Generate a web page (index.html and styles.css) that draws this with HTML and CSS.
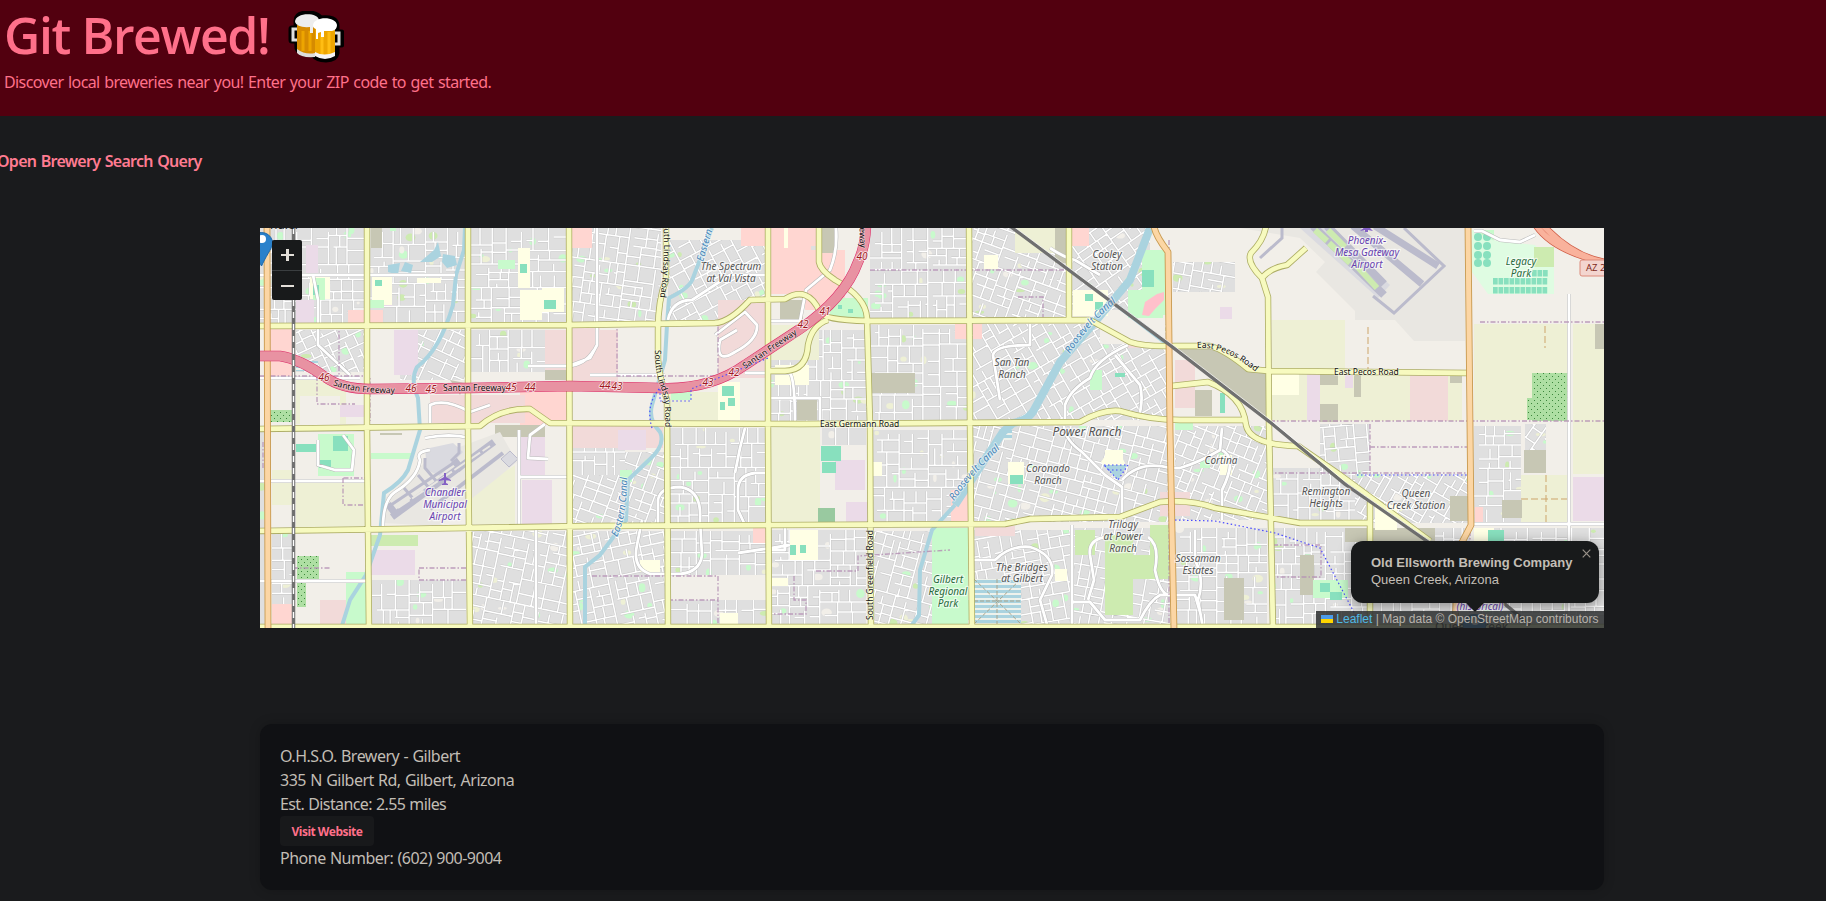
FILE: index.html
```html
<!DOCTYPE html>
<html lang="en">
<head>
<meta charset="utf-8">
<title>Git Brewed!</title>
<link rel="stylesheet" href="styles.css">
</head>
<body>
<header class="hero">
  <h1 class="hero-title"><span class="hero-name">Git Brewed!</span>
    <svg class="beer" width="56" height="52" viewBox="0 0 56 52" aria-hidden="true">
      <g stroke="#000" stroke-width="7" stroke-linejoin="round" fill="#000">
        <path d="M8 18H4v11h5M48 22h5v11h-5M9 10q0-7 11-7 9 0 12 5 16-2 16 7v27q-1 6-10 6-9 0-12-5-14 0-16-6z"/>
      </g>
      <path d="M9 18H5v11h5M47 22h4v11h-5" fill="none" stroke="#dedede" stroke-width="3"/>
      <path d="M9 14h19v29q-15 2-19-4z" fill="#d68b00"/><path d="M15 20v20M22 20v20" stroke="#eda500" stroke-width="3"/>
      <path d="M9 38q8 6 18 4v4Q13 47 9 42z" fill="#ddd"/>
      <path d="M7 11C7 1 30 1 31 9v10h-3v-3q-2-2-3 1v5h-3v-6q-13 1-15-5z" fill="#ededed"/>
      <path d="M27 17h20v27q-10 4-20 0z" fill="#eda500"/><path d="M34 23v21M41 21v22" stroke="#ffbd13" stroke-width="3"/>
      <path d="M27 41q9 5 20 0v4q-10 6-20 0z" fill="#f5f5f5"/>
      <path d="M25 14C26 5 48 5 49 14q0 5-5 6h-8v6h-3v-5l-3 1v6h-2V18q-3-1-3-4z" fill="#fff"/>
    </svg>
  </h1>
  <p class="hero-text">Discover local breweries near you! Enter your ZIP code to get started.</p>
</header>
<main>
  <h2 class="query">Open Brewery Search Query</h2>
  <section class="map">
    <svg class="tiles" viewBox="260 228 1344 400" width="1344" height="400">
      <defs>
        <pattern id="orchard" width="6" height="6" patternUnits="userSpaceOnUse"><rect width="6" height="6" fill="#aedfa3"/><rect x="1" y="1" width="1" height="1" fill="#3c873c"/><rect x="4" y="4" width="1" height="1" fill="#3c873c"/></pattern>
        <pattern id="basin" width="6" height="5" patternUnits="userSpaceOnUse"><rect width="6" height="5" fill="#eef2ec"/><rect width="6" height="3" fill="#aad3df"/></pattern>
        <path id="freeway" d="M255 356H280Q300 359 325 377Q342 389 370 389L470 388 570 386 660 388Q710 390 745 365L800 329Q845 298 858 262Q866 245 866 222"/>
        <path id="lbl-f1" d="M333 385Q355 394 400 393"/>
        <path id="lbl-f2" d="M745 369L800 332"/>
        <path id="lbl-l1" d="M663 219Q666 262 659 305"/>
        <path id="lbl-l2" d="M655 350Q655 375 661 388Q666 398 665 430"/>
        <path id="lbl-ec" d="M617 537Q628 515 627 470"/>
        <path id="lbl-e" d="M703 262L716 218"/>
        <path id="lbl-r1" d="M1070 354Q1090 322 1125 295"/>
        <path id="lbl-r2" d="M954 501Q975 470 1010 440"/>
        <path id="lbl-pecos" d="M1197 348Q1225 346 1258 374"/>
      </defs>
      <rect x="260" y="228" width="1344" height="400" fill="#f2efe9"/>
      <g id="streets"></g>
      <g id="zones"></g>
      <g class="airport">
        <path d="M1240 228H1465V341H1414L1395 320H1355V311L1316 272 1325 262 1300 238Z" fill="#e9e7e2"/>
        <path d="M1300 228H1330L1390 285 1378 298Z" fill="#dadae0"/>
        <path d="M1313 226L1384 295M1327 226L1384 284" stroke="#bbbbcc" stroke-width="8"/>
        <path d="M1353 226L1422 284M1375 226L1438 266" stroke="#bbbbcc" stroke-width="7"/>
        <path d="M1373 296L1394 313 1444 266 1404 228" stroke="#bbbbcc" stroke-width="3"/>
        <path d="M1315 230L1327 241M1329 243L1350 263M1353 262L1377 288M1328 230L1345 247" stroke="#cdebb0" stroke-width="6"/>
        <path d="M1240 226h42v12l-22 20" stroke="#bbbbcc" stroke-width="3"/>
        <path d="M470 495L515 465V524H470Z" fill="#eef0d5"/>
        <path d="M383 523V500L430 458 500 432 517 462 470 500 440 526Z" fill="#e9e7e2"/>
        <path d="M425 449L453 443 463 452 440 476 427 470Z" fill="#dadae0"/>
        <path d="M392 517L494 442M394 512l-6-8M454 460l8 10" stroke="#bbbbcc" stroke-width="7"/>
        <path d="M388 507L458 460M404 488l12 14M418 475l12 14M425 458v10l12 14M459 443v10l-8 8" stroke="#bbbbcc" stroke-width="3"/>
        <path d="M430 509L503 453" stroke="#bbbbcc" stroke-width="4"/>
        <path d="M398 508L490 446M435 500L496 453" stroke="#e9e7e2" stroke-width="2" stroke-dasharray="14 3"/>
        <path d="M501 459l9-8 8 8-9 8z" fill="#dadae0" stroke="#bbbbcc"/>
      </g>
      <g class="water">
        <path d="M465 228L464 250 456 275 453 305Q440 350 417 367 410 380 418 398L420 430 408 470Q402 482 384 493L380 535 366 575 350 600 340 632" />
        <path d="M712 228L693 278Q690 288 669 298L667 325 665 360 652 405Q648 420 660 432 666 445 649 460L628 480 626 520 600 555 585 567V632"/>
        <path class="wide" d="M1150 228L1130 280 1095 322 1060 362 1035 408Q1030 420 1013 423L1003 432 955 505" />
        <path d="M955 505L932 530 920 570 919 615 907 632M1110 300L1168 345"/>
      </g>
      <g id="locals"></g>
      <g class="borders">
        <path d="M260 376H370V421M317 376V404H355M339 324V376M343 478V505H366V478ZM419 568H468V580H419ZM668 324H718V376H617V325M870 270H1068M1018 297H1043V318M1480 322H1604M1270 421H1604M1370 424V472M1370 447H1468M1268 473H1470M592 576H718V628M668 600H718M794 576V600H806V614H772M816 571H858V556L950 550M570 390V430M1273 545H1321V577H1273ZM1470 426V630M1169 240V630M263 468V440M293 568H330"/>
      </g>
      <g id="roads"></g>
      <g fill="none">
        <use href="#freeway" stroke="#dc2a67" stroke-width="10.500"/><use href="#freeway" stroke="#e892a2" stroke-width="9.500"/>
        <path d="M1534 222Q1550 250 1604 262M1540 222Q1570 256 1604 262" stroke="#cf5c45" stroke-width="7"/>
        <path d="M1534 222Q1550 250 1604 262M1540 222Q1570 256 1604 262" stroke="#f9b29c" stroke-width="5.500"/>
        <path d="M293.500 228V628M1010 226L1116 305 1170 345 1270 422 1345 484 1440 550 1530 625" stroke="#707070" stroke-width="3.500"/>
        <path d="M293.500 228V628" stroke="#fff" stroke-width="1.400" stroke-dasharray="6 6"/>
        <path d="M1013 226L1119 305 1173 345 1273 422 1348 484 1443 550" stroke="#fff" stroke-width=".7"/>
        <path d="M652 428Q645 405 660 388V401H691V389L768 358M1175 520L1215 521 1275 533 1320 548 1358 620M1357 475H1468M1104 465H1128L1118 480ZM1108 470H1124" stroke="#4a4aff" stroke-width="1.200" stroke-dasharray="1.500 2.500"/>
      </g>
      <g class="place">
        <text x="731" y="270">The Spectrum</text><text x="731" y="282">at Val Vista</text>
        <text x="1107" y="258">Cooley</text><text x="1107" y="270">Station</text>
        <text x="1012" y="366">San Tan</text><text x="1012" y="378">Ranch</text>
        <text class="big" x="1087" y="436">Power Ranch</text>
        <text x="1048" y="472">Coronado</text><text x="1048" y="484">Ranch</text>
        <text x="1221" y="464">Cortina</text>
        <text x="1123" y="528">Trilogy</text><text x="1123" y="540">at Power</text><text x="1123" y="552">Ranch</text>
        <text x="1022" y="571">The Bridges</text><text x="1022" y="582">at Gilbert</text>
        <text x="1198" y="562">Sossaman</text><text x="1198" y="574">Estates</text>
        <text x="1326" y="495">Remington</text><text x="1326" y="507">Heights</text>
        <text x="1416" y="497">Queen</text><text x="1416" y="509">Creek Station</text>
      </g>
      <g class="place green">
        <text x="948" y="583">Gilbert</text><text x="948" y="595">Regional</text><text x="948" y="607">Park</text>
        <text x="1521" y="265">Legacy</text><text x="1521" y="277">Park</text>
      </g>
      <g class="place purple">
        <text x="445" y="496">Chandler</text><text x="445" y="508">Municipal</text><text x="445" y="520">Airport</text>
        <text x="1367" y="244">Phoenix-</text><text x="1367" y="256">Mesa Gateway</text><text x="1367" y="268">Airport</text>
        <text x="1480" y="610">(historical)</text>
      </g>
      <path d="M444 473h2v4l5 3v1l-5-1v3l2 1v1h-6v-1l2-1v-3l-5 1v-1l5-3zM1366 226h2l5 5-5-1v2h-3v-2l-5 1z" fill="#8461c4"/>
      <g class="road">
        <text><textPath href="#lbl-f1">Santan Freeway</textPath></text><text x="443" y="391">Santan Freeway</text>
        <text><textPath href="#lbl-f2">Santan Freeway</textPath></text>
        <text><textPath href="#lbl-l1">South Lindsay Road</textPath></text><text><textPath href="#lbl-l2">South Lindsay Road</textPath></text>
        <text><textPath href="#lbl-pecos">East Pecos Road</textPath></text>
        <text x="820" y="427">East Germann Road</text><text x="1334" y="375">East Pecos Road</text>
        <text transform="translate(873 620) rotate(-90)">South Greenfield Road</text>
        <text transform="translate(859 215) rotate(88)">Freeway</text>
      </g>
      <g class="canal">
        <text><textPath href="#lbl-e">Eastern</textPath></text><text><textPath href="#lbl-ec">Eastern Canal</textPath></text>
        <text><textPath href="#lbl-r1">Roosevelt Canal</textPath></text><text><textPath href="#lbl-r2">Roosevelt Canal</textPath></text>
      </g>
      <g class="exit">
        <text x="324" y="381">46</text><text x="411" y="392">46</text><text x="431" y="393">45</text><text x="511" y="391">45</text><text x="530" y="391">44</text><text x="605" y="389">44</text><text x="617" y="390">43</text><text x="708" y="386">43</text><text x="734" y="376">42</text><text x="803" y="328">42</text><text x="825" y="315">41</text><text x="862" y="260">40</text>
      </g>
      <text x="270" y="229" class="town">hdler</text><text x="1435" y="631" class="town">Queen Creek</text>
      <rect x="1580" y="260" width="40" height="16" rx="2" fill="#f3d5cf" stroke="#dc8a7a"/><text x="1586" y="271" class="shield">AZ 24</text>
      <g id="pin"><path d="M250 241a12 13 0 0 1 22.500 0c1 6-4 10-11 25c-6-12-12-19-11.500-25z" fill="#2a81cb" stroke="#2069a8"/><circle cx="262" cy="239" r="4" fill="#fff"/></g>
      <use href="#pin" x="1213" y="382"/>
    </svg>
    <div class="zoom"><span class="zoom-btn"><i></i><i class="v"></i></span><span class="zoom-btn"><i></i></span></div>
    <div class="popup"><b>Old Ellsworth Brewing Company</b><br>Queen Creek, Arizona<svg class="close" width="9" height="9" viewBox="0 0 9 9"><path d="M.7.7l7.600 7.600M8.300.7L.7 8.300"/></svg></div>
    <div class="attribution"><svg width="12" height="8" viewBox="0 0 12 8"><path fill="#4c9bea" d="M0 0h12v4H0z"/><path fill="#ffd500" d="M0 4h12v4H0z"/></svg> <a>Leaflet</a> | Map data © OpenStreetMap contributors</div>
  </section>
  <article class="card">
    <p>O.H.S.O. Brewery - Gilbert</p>
    <p>335 N Gilbert Rd, Gilbert, Arizona</p>
    <p class="distance">Est. Distance: 2.55 miles</p>
    <button class="visit">Visit Website</button>
    <p>Phone Number: (602) 900-9004</p>
  </article>
</main>
<script src="map.js"></script>
</body>
</html>
```
FILE: styles.css
```css
* { box-sizing: border-box; }
html, body { margin: 0; height: 901px; overflow: hidden; }
body { background: #1a1b1d; color: #c2bdb5; font: 16px/24px "Noto Sans", sans-serif; }
.hero { height: 116px; padding: 5px 4px; background: #52000f; color: #ff708a; }
.hero-title { display: flex; align-items: flex-start; height: 62px; margin: 0; font-size: 50px; line-height: 60px; font-weight: 600; }
.hero-name { width: 284px; white-space: nowrap; font-family: "Open Sans", "Noto Sans", sans-serif; letter-spacing: -1.400px; }
.beer { margin-top: 6px; }
.hero-text { margin: 3px 0 0; letter-spacing: -.6px; word-spacing: 1px; }
.query { height: 24px; margin: 33px 0 0 -3px; color: #ff7b91; font-size: 16px; line-height: 24px; font-weight: 600; letter-spacing: -.72px; word-spacing: 1px; }
.map { position: relative; width: 1344px; height: 400px; margin: 55px 0 0 260px; overflow: hidden; font-family: "Liberation Sans", Arial, sans-serif; }
.tiles { display: block; }
.airport path[stroke]:not([fill]) { fill: none; }
.water { fill: none; stroke: #aad3df; stroke-width: 4; }
.water .wide { stroke-width: 8; }
.borders { fill: none; stroke: #b48fb4; stroke-width: 1.3; stroke-dasharray: 5 2 1.5 2; opacity: .85; }
.place, .road, .canal, .exit { font-family: "Noto Sans", sans-serif; paint-order: stroke; stroke-linejoin: round; }
.place { font-size: 10px; font-style: italic; text-anchor: middle; fill: #555; stroke: #ffffff99; stroke-width: 2.5px; }
.place .big { font-size: 12px; }
.green { fill: #286a3c; }
.purple { fill: #6843b0; }
.road { font-size: 8.5px; fill: #111; stroke: #ffffff70; stroke-width: 1.5px; }
.canal { font-size: 10px; font-style: italic; fill: #4a86b8; stroke: #ffffff80; stroke-width: 2px; }
.exit { font-size: 10px; font-style: italic; text-anchor: middle; fill: #a01822; stroke: #ffffffd0; stroke-width: 1.6px; }
.town { font: 12px "Noto Sans", sans-serif; fill: #222; }
.shield { font: 9.5px "Noto Sans", sans-serif; fill: #7e2a1c; }
.zoom { position: absolute; left: 12px; top: 12px; width: 30px; border-radius: 2px; overflow: hidden; background: #181a1b; }
.zoom-btn { display: grid; height: 30px; place-items: center; }
.zoom-btn + .zoom-btn { border-top: 1px solid #3a3e40; }
.zoom-btn i { grid-area: 1 / 1; width: 13px; height: 2px; background: #e3dfd9; }
.zoom-btn .v { width: 3px; height: 12px; }
.popup { position: absolute; left: 1091px; top: 313px; width: 248px; height: 62px; padding: 13px 20px; border-radius: 12px; background: #181a1b; box-shadow: 0 3px 14px #0006; color: #c3beb6; font-size: 13px; line-height: 17px; white-space: nowrap; }
.popup::after { content: ""; position: absolute; left: 115px; top: 62px; border: 9px solid transparent; border-top-color: #181a1b; border-bottom: 0; }
.close { position: absolute; right: 8px; top: 8px; fill: none; stroke: #999289; stroke-width: 1.2; }
.attribution { position: absolute; right: 0; bottom: 0; width: 288px; height: 17px; padding-left: 5px; background: #2c2e2fd9; color: #b8b3ab; font-size: 12px; line-height: 16px; white-space: nowrap; }
.attribution a { color: #4fb9e4; }
.card { width: 1344px; height: 166px; margin: 96px 0 0 260px; padding: 20px; border-radius: 12px; background: #101114; box-shadow: 0 0 12px #0003; letter-spacing: -.5px; word-spacing: .6px; }
.card p { margin: 0; }
.card .distance { letter-spacing: -.62px; }
.visit { display: block; width: 94px; height: 30px; padding: 0; border: 0; border-radius: 4px; background: #18191b; color: #ff708a; font: 700 12px "Noto Sans", sans-serif; letter-spacing: -.5px; }
```
FILE: map.js
```js
let seed = 11;
const rnd = () => (seed = (seed * 16807) % 2147483647) / 2147483647;
const byId = id => document.getElementById(id);
const line = (d, color, width) => `<path d="${d}" fill="none" stroke="${color}" stroke-width="${width}" stroke-linejoin="round"/>`;

// Neighbourhoods: left, top, right, bottom, street rotation.
const blocks = [
  [260,228,365,324],[296,330,366,372,-25],[369,228,466,324],[400,330,466,380,25],[471,228,566,323],[471,330,545,372],
  [571,228,661,322,8],[668,240,766,320,-28],[771,228,818,280],[870,228,967,318],[971,228,1067,318,20],[1071,228,1150,310,-35],
  [870,325,967,422],[820,330,867,424],[972,324,1168,420,-30],[972,426,1170,522,15],[972,530,1070,626,-10],[1074,528,1170,626,10],
  [1175,426,1267,520,22],[1175,528,1267,626],[1271,468,1368,520],[1320,424,1370,475,-5],[1355,474,1468,523,30],[1474,426,1521,522],[1525,424,1560,470,35],
  [1270,528,1370,626],[1370,528,1470,626],[1474,528,1604,626],[670,428,766,524],[770,330,866,424],[770,530,866,626],
  [571,452,665,525,20],[571,531,665,626,-12],[471,531,567,626,12],[372,580,466,626],[670,531,766,575],[670,600,766,626],
  [872,430,967,524],[873,531,940,626,15],[1173,262,1235,292,10],[571,430,625,475],[822,428,866,445],[260,430,266,626],[272,531,292,604]
];
const tints = ['#c8facc','#cdebb0','#eef0d5','#f2efe9','#c8facc','#c8facc'];
let out = '', clips = '';
function split(x, y, w, h, list) {
  if (Math.max(w, h) < 18 || (Math.min(w, h) < 7)) return;
  const t = .35 + rnd() * .3;
  if (w > h * (.6 + rnd())) {
    const c = x + w * t, gap = rnd() < .35 ? 4 : 0;
    list.push(`M${c.toFixed(1)} ${y + gap}V${(y + h).toFixed(1)}`);
    split(x, y, w * t, h, list); split(c, y, w * (1 - t), h, list);
  } else {
    const c = y + h * t, gap = rnd() < .35 ? 5 : 0;
    list.push(`M${x + gap} ${c.toFixed(1)}H${(x + w).toFixed(1)}`);
    split(x, y, w, h * t, list); split(x, c, w, h * (1 - t), list);
  }
}
blocks.forEach(([x, y, r, b, a = 0], i) => {
  const w = r - x, h = b - y, pad = a ? Math.max(w, h) * .4 : 0, list = [];
  split(x - pad, y - pad, w + 2 * pad, h + 2 * pad, list);
  clips += `<clipPath id="c${i}"><rect x="${x}" y="${y}" width="${w}" height="${h}"/></clipPath>`;
  let greens = '';
  for (let k = 0; k < w * h / 900; k++) {
    greens += `<ellipse cx="${x + rnd() * w}" cy="${y + rnd() * h}" rx="${1.5 + rnd() * 4}" ry="${1.5 + rnd() * 3}" fill="${tints[Math.floor(rnd() * 6)]}"/>`;
  }
  const d = list.join('');
  out += `<g clip-path="url(#c${i})"><rect x="${x}" y="${y}" width="${w}" height="${h}" fill="#dfdfdf"/>${greens}<g transform="rotate(${a} ${x + w / 2} ${y + h / 2})">${line(d, '#c6c6c6', 2.4)}${line(d, '#fff', 1.5)}</g></g>`;
});
byId('streets').innerHTML = `<defs>${clips}</defs>` + out;

// Land use: colour, then x y width height for each plot.
const land = {
  '#eef0d5': [[771,426,49,96],[1272,320,73,50],[1272,373,190,48],[1474,324,94,96],[1573,324,31,150],[1521,475,49,47],[296,480,70,48],[272,470,21,35],[296,380,50,44],[668,392,52,30],[771,325,48,35],[1015,228,55,25],[470,470,45,50]],
  '#ffd6d1': [[268,328,24,48],[571,228,21,20],[741,228,78,18],[771,246,40,48],[805,250,40,60],[556,330,14,45],[520,390,48,35],[571,400,20,25],[1072,228,17,18],[955,324,12,15],[973,324,9,15],[951,490,18,32],[272,604,21,24],[753,527,13,16],[348,310,35,14],[1475,507,8,15]],
  '#f2dad9': [[545,330,22,45],[572,328,28,58],[600,330,18,55],[718,300,50,78],[430,395,95,28],[1175,360,20,48],[1410,375,38,46],[1160,492,30,24],[571,426,92,22],[1128,332,15,16],[320,600,48,28],[975,526,40,10]],
  '#ebdbe8': [[394,330,24,45],[296,300,18,28],[306,245,12,30],[380,288,12,18],[371,550,44,25],[328,405,38,12],[517,430,28,45],[522,480,30,45],[835,460,30,30],[846,502,22,20],[1307,373,13,48],[1573,477,31,44],[1220,307,12,12],[618,430,28,20],[1345,373,8,15]],
  '#c7c7b4': [[495,425,50,12],[371,228,11,20],[380,433,22,20],[1055,228,13,35],[1195,390,17,26],[1320,373,18,12],[1354,373,7,24],[1320,404,18,18],[1450,373,12,10],[1595,324,9,25],[1450,496,18,25],[1502,500,20,18],[1224,578,20,42],[1300,555,14,40],[780,300,23,23],[797,400,20,20],[870,373,45,20],[1345,528,90,14],[1524,450,22,23],[545,370,22,10],[822,228,12,25]],
  '#f2efe9': [[1272,240,42,60],[372,435,30,55],[300,396,40,30],[618,330,50,45],[572,395,30,30],[670,328,46,50],[1172,320,80,25],[420,535,45,42],[822,462,12,60],[1100,322,65,22],[1546,424,26,50],[272,388,22,12],[334,535,32,44]],
  '#ffffe5': [[310,277,20,22],[518,248,12,40],[520,290,22,30],[372,275,20,30],[542,288,22,24],[718,382,22,38],[775,365,34,20],[784,228,4,20],[790,530,28,30],[770,578,18,8],[984,255,14,14],[1008,462,16,22],[1105,450,18,16],[1055,569,12,12],[1220,455,12,20],[1073,290,35,26],[1272,373,27,22],[1375,505,22,25],[720,613,18,14],[640,560,20,12],[1474,528,20,18],[872,462,10,14],[417,278,24,5]],
  '#c8facc': [[318,434,36,42],[313,278,12,22],[369,300,15,8],[498,260,17,9],[671,391,20,9],[1142,250,24,65],[1128,290,35,28],[932,528,36,100],[371,453,40,6],[1474,230,20,42],[830,298,38,22],[346,572,20,56],[620,470,12,12],[1175,420,18,10],[1200,460,10,8],[1313,580,35,18],[1090,370,12,20],[960,600,10,20],[390,228,6,3]],
  '#88e0be': [[296,444,20,8],[333,436,15,15],[319,460,12,8],[520,264,7,9],[544,300,12,9],[821,446,20,15],[822,462,14,11],[790,545,6,10],[800,545,6,8],[722,386,12,10],[720,402,5,8],[728,398,7,8],[1142,270,12,17],[1085,294,8,7],[1095,302,8,8],[1320,583,10,9],[1330,592,12,8],[1488,530,16,12],[1010,475,13,9],[1220,393,5,20],[838,305,4,4],[848,309,5,4],[313,285,6,10],[375,280,7,6],[1115,373,10,4]],
  '#cdebb0': [[371,535,47,11],[1534,247,20,20],[1105,535,28,80],[1075,530,20,25],[1130,555,40,24],[1150,525,20,30]],
  '#99c9a0': [[818,508,17,15]],
  'url(#orchard)': [[1532,373,38,48],[1527,398,8,22],[270,410,22,12],[297,556,22,24],[297,583,9,24]],
  'url(#basin)': [[974,579,47,45],[296,361,22,10],[1003,428,9,12]]
};
let plots = '';
for (const color in land) for (const [x, y, w, h] of land[color]) {
  plots += `<rect x="${x}" y="${y}" width="${w}" height="${h}" fill="${color}"/>`;
}
plots += '<path d="M1472 272V230L1492 240 1535 245 1554 268V294H1488Z" fill="#dffce2"/><rect x="1534" y="247" width="20" height="20" fill="#cdebb0"/>';
for (const y of [270, 278, 287]) for (let x = y === 270 ? 1532 : 1493; x < 1546; x += 5.5) plots += `<rect x="${x}" y="${y}" width="4.700" height="6.500" fill="#88e0be"/>`;
for (const [x, y] of [[1478,237],[1487,237],[1478,246],[1487,246],[1478,255],[1487,255],[1478,263],[1487,263]]) plots += `<circle cx="${x}" cy="${y}" r="4" fill="#88e0be"/>`;
plots += '<path d="M1142 315l3-13 12-8 7-2v8l-9 9-6 7z" fill="#ffc0cb"/><path d="M388 265l12-2-2 12-10-3M405 262l8 3-2 8-10-2M420 262l14-12 4-8 3 14-9 6M443 254l12 2 2 9-10 3-5-6z" fill="#aad3df"/><path d="M450 380l15 3-5 12zM1172 348H1212L1240 362 1258 373H1267V418L1225 386Z" fill="#c7c7b4"/><path d="M974 579l47 45M974 624l47-45M997 579v45M974 601h47" stroke="#a9a38a" stroke-dasharray="4 2"/><path d="M1368 327v42M1545 326v22M1546 475v47M1521 499h48" stroke="#cda56a" stroke-dasharray="7 3"/><path d="M1101 462l7-10 10-2 7 13-9 16z" fill="#ffffe5"/><path d="M1103 465h24l-9 15z" fill="#aad3df"/>';
byId('zones').innerHTML = plots;

const locals = [
  'M260 275H455','M260 378H360','M260 481H366M260 581H366','M1569 294V628','M1473 524H1604','M313 275L318 300V345L350 375',
  'M571 365L590 358 597 345V228','M430 450Q415 452 420 460 418 478 395 492 383 500 383 528','M425 438Q450 433 470 438',
  'M528 366H568Q585 365 594 350M430 423V405Q445 398 470 412L490 405','M715 335L745 312 757 325Q758 340 735 352 715 365 720 340L737 330',
  'M668 320Q672 300 692 300L730 275H766','M768 321H800L806 290 830 270Q838 250 836 228','M590 375H665','M745 373H790Q795 380 795 424M770 398H820V424',
  'M1050 248Q1065 258 1075 260L1100 275M1030 324V345Q995 345 993 355L1000 400','M1065 422V405Q1070 390 1090 378 1095 360 1128 345M1115 355L1140 385Q1144 400 1138 420',
  'M1064 426Q1065 440 1082 452L1105 475 1122 487V522M1122 480Q1140 460 1170 468H1180Q1200 462 1220 450L1222 428M1222 450Q1238 458 1222 490V520',
  'M972 560H995Q1010 545 1030 547 1055 555 1052 575L1040 600 1048 628M1072 525V628M1105 537Q1088 540 1090 555L1094 580 1088 600M1072 602H1090L1105 620H1140Q1150 600 1160 595H1195L1200 612M1148 537Q1160 545 1155 570 1160 595 1170 595M1195 530V560Q1205 580 1198 600L1203 628',
  'M658 525V500Q660 487 680 487 702 490 700 520L702 555Q700 572 680 574H650Q632 568 637 545L642 520','M768 473H755Q738 475 738 490V510L745 525M735 473L740 448 745 428','M770 550H785V525M738 553L790 545',
  'M536 528V630M295 430H366M318 440V465L335 470H352L354 450 343 435','M519 528V430M519 477H569M545 424L530 435 528 458 548 459M1474 231H1482L1500 240 1520 242 1535 235'
];
const all = locals.join('');
byId('locals').innerHTML = line(all, '#b9b9b9', 3.8) + line(all, '#fff', 2.8);

const yellow = [
  'M367 226L367 430 369 630','M468 226V430L470 630','M569 226L570 630','M666 226V280Q658 300 658 330V360Q660 380 667 400L668 630','M768 226V428L769 630',
  'M819 226V262Q820 270 835 280 866 297 867 318L870 425 871 630','M969 226L970 425 972 630','M1069 226V318','M1266 226Q1264 240 1251 253 1246 262 1262 278L1268 297 1269 425 1273 630',
  'M1262 278Q1270 268 1287 265L1306 248','M255 326L568 325 715 323Q730 322 750 300L785 299Q808 285 820 312 822 320 868 321L1090 320 1130 342Q1145 347 1175 346H1210Q1225 350 1248 369L1270 371 1469 373',
  'M828 320Q812 325 808 345 807 370 785 371H768','M255 429L480 426Q500 408 530 409L550 423 800 424 1080 422Q1103 409 1120 411 1150 420 1180 420H1245',
  'M1172 386L1208 382Q1243 395 1246 425 1250 445 1298 446L1340 475 1430 541','M255 531L400 529 590 526 1005 524 1030 519 1120 517 1160 502Q1190 499 1215 508L1300 523H1370V500M1370 523V628','M255 627H1604'
].join('');
const orange = ['M267 226L268 630','M1154 226Q1155 235 1168 252L1170 430 1174 630','M1468 226L1471 525 1458 550 1455 630'].join('');
byId('roads').innerHTML = line(yellow, '#adad65', 6.4) + line(yellow, '#f7fabf', 4.8) + line(orange, '#c89a50', 6.8) + line(orange, '#fcd6a4', 5);
```
